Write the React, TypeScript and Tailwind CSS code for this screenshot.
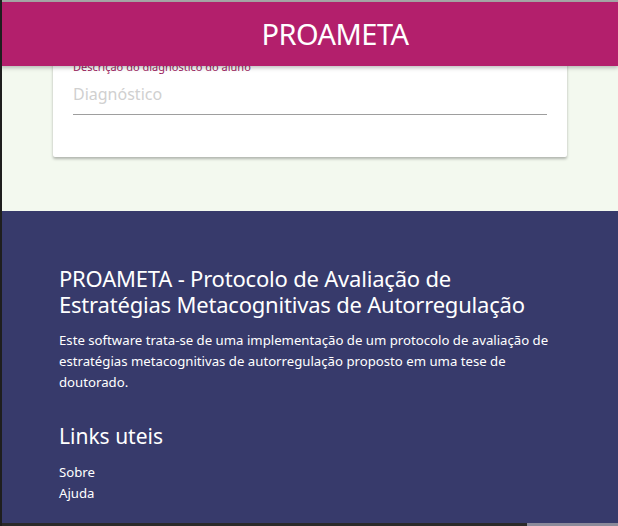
import React from "react";

export default function App() {
  const font = { fontFamily: '"Noto Sans", "Open Sans", sans-serif' };
  return (
    <div className="relative w-[618px] h-[526px] overflow-hidden bg-[#2a2a2a]" style={font}>
      <div className="absolute left-0 top-0 w-[618px] h-[2px] bg-[#a7a7a7]" />
      <div className="absolute left-0 top-0 w-[2px] h-[526px] bg-[#1e1e1e] z-20" />
      <div className="absolute left-0 top-[2px] w-[618px] h-[64px] bg-[#b31f6c] z-10 flex items-center justify-center pl-[52px] shadow-[0_2px_4px_rgba(0,0,0,0.25)]">
        <span className="text-white text-[29px] tracking-[-0.5px]">PROAMETA</span>
      </div>
      <div className="flex flex-col w-[618px] h-[523px] pt-[2px]">
        <div className="h-[209px] bg-[#f3f9ef] flex flex-col pl-[53px] pr-[51px]">
          <div className="mt-[10px] h-[145px] bg-white rounded-[2px] shadow-[0_2px_3px_rgba(0,0,0,0.28)] px-[20px] pt-[48px]">
            <div className="text-[11px] leading-[14px] text-[#9c1c5e]">Descrição do diagnóstico do aluno</div>
            <div className="mt-[10px] h-[31px] border-b border-[#9e9e9e] text-[16px] leading-[20px] text-[#d0d0d0]">Diagnóstico</div>
          </div>
        </div>
        <div className="flex-1 bg-[#373a6b] pl-[59px] pt-[54px] text-white">
          <div className="text-[22px] leading-[26px] tracking-[-0.2px]">
            PROAMETA - Protocolo de Avaliação de<br />Estratégias Metacognitivas de Autorregulação
          </div>
          <p className="mt-[13px] text-[13.2px] leading-[21px] w-[500px]">
            Este software trata-se de uma implementação de um protocolo de avaliação de estratégias metacognitivas de autorregulação proposto em uma tese de doutorado.
          </p>
          <div className="mt-[29px] text-[21px] leading-[28px]">Links uteis</div>
          <div className="mt-[12px] text-[13.2px] leading-[21px]">
            <div>Sobre</div>
            <div>Ajuda</div>
          </div>
        </div>
      </div>
      <div className="absolute left-[527px] bottom-0 w-[91px] h-[3px] bg-[#8a8a9a]" />
    </div>
  );
}
